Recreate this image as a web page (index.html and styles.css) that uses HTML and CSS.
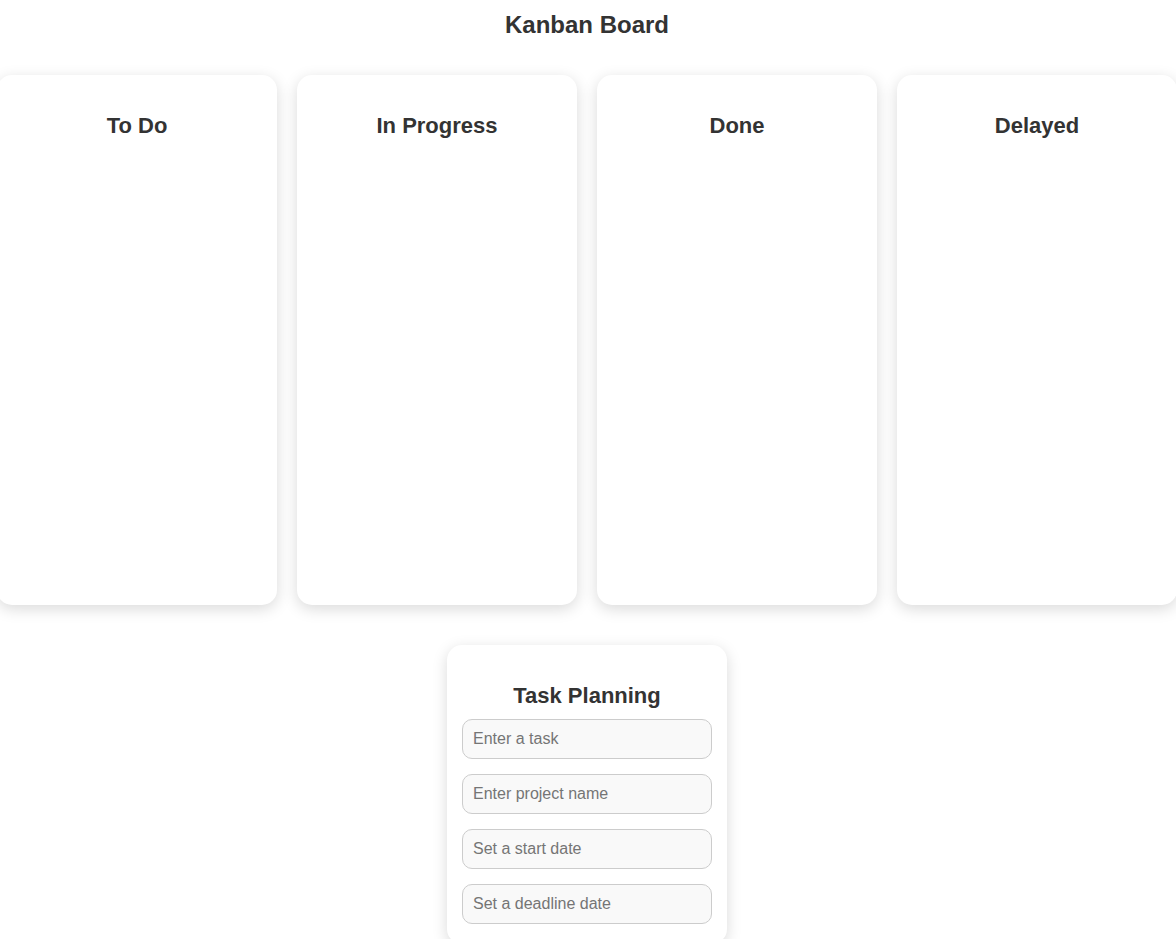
FILE: index.html
```html
<!DOCTYPE html>
<html lang="en">
<head>
<meta charset="utf-8">
<title>Kanban Board</title>
<link rel="stylesheet" href="styles.css">
</head>
<body>
<div class="page">
  <h1 class="title">Kanban Board</h1>
  <div class="board">
    <div class="column"><h2 class="column-title">To Do</h2></div>
    <div class="column"><h2 class="column-title">In Progress</h2></div>
    <div class="column"><h2 class="column-title">Done</h2></div>
    <div class="column"><h2 class="column-title">Delayed</h2></div>
  </div>
  <div class="planner">
    <h2 class="planner-title">Task Planning</h2>
    <input class="field" type="text" placeholder="Enter a task">
    <input class="field" type="text" placeholder="Enter project name">
    <input class="field" type="text" placeholder="Set a start date">
    <input class="field" type="text" placeholder="Set a deadline date">
  </div>
</div>
</body>
</html>
```

FILE: styles.css
```css
html, body {
  margin: 0;
  padding: 0;
  background: #ffffff;
}
body {
  font-family: "Liberation Sans", Arial, sans-serif;
  color: #333333;
  overflow: hidden;
}
.page {
  width: 1174px;
  display: flex;
  flex-direction: column;
  align-items: center;
}
.title {
  font-size: 24px;
  font-weight: bold;
  line-height: 28px;
  margin: 11px 0 0;
  color: #333333;
}
.board {
  margin-top: 36px;
  display: flex;
  justify-content: center;
  gap: 20px;
  width: 1174px;
}
.column {
  flex: 0 0 280px;
  height: 530px;
  box-sizing: border-box;
  background: #ffffff;
  border-radius: 15px;
  box-shadow: 0 4px 15px rgba(0, 0, 0, 0.15);
  padding: 38px 15px 15px;
}
.column-title {
  margin: 0;
  font-size: 22px;
  line-height: 26px;
  text-align: center;
  color: #333333;
}
.planner {
  margin-top: 40px;
  width: 280px;
  box-sizing: border-box;
  background: #ffffff;
  border-radius: 15px;
  box-shadow: 0 4px 15px rgba(0, 0, 0, 0.15);
  padding: 38px 15px 20px;
  display: flex;
  flex-direction: column;
  gap: 15px;
}
.planner-title {
  margin: 0 0 -5px;
  font-size: 22px;
  line-height: 26px;
  text-align: center;
  color: #333333;
}
.field {
  height: 40px;
  box-sizing: border-box;
  width: 250px;
  padding: 0 10px;
  border: 1px solid #cccccc;
  border-radius: 10px;
  background: #f9f9f9;
  font-family: "Liberation Sans", Arial, sans-serif;
  font-size: 16px;
  color: #333333;
  outline: none;
}
.field::placeholder {
  color: #757575;
}
```
